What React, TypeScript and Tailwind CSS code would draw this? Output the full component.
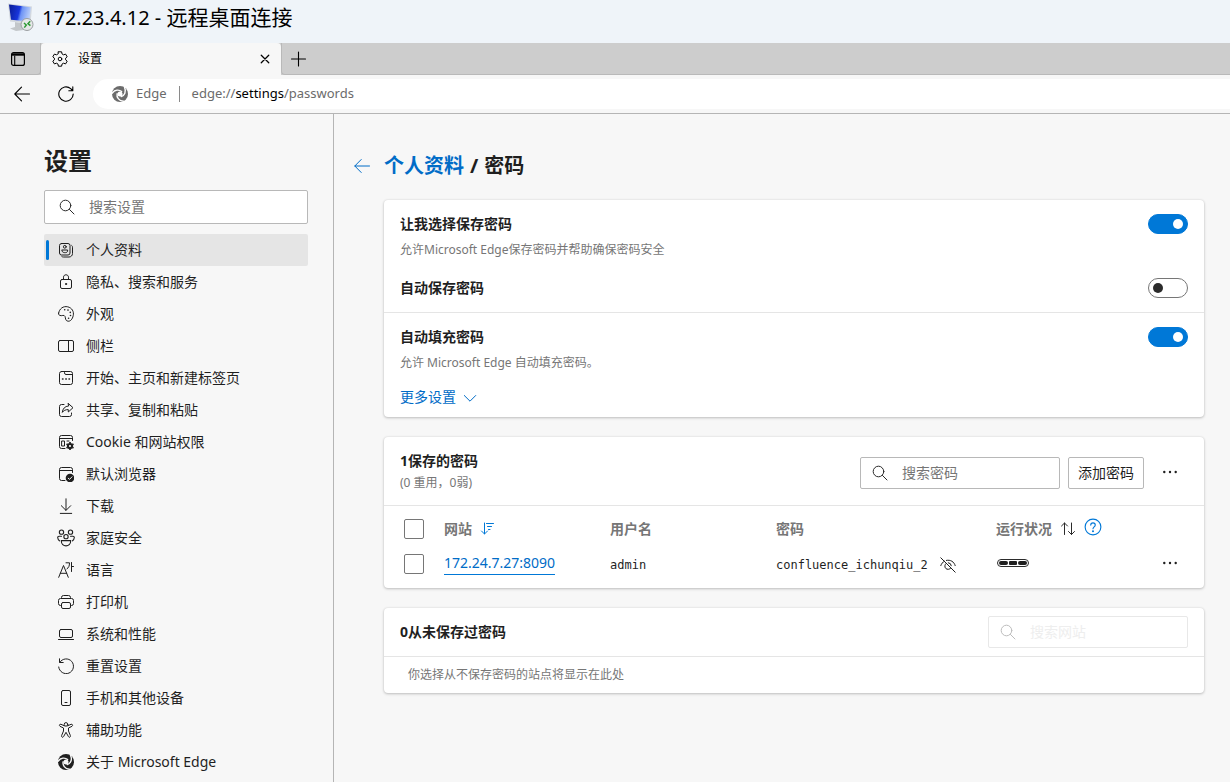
import React, { useState } from 'react';

interface IconProps {
    children: React.ReactNode;
    size?: number;
    className?: string;
}

function Icon({ children, size = 16, className = '' }: IconProps) {
    return (
        <svg
            width={size}
            height={size}
            viewBox="0 0 16 16"
            fill="none"
            stroke="currentColor"
            strokeLinecap="round"
            strokeLinejoin="round"
            aria-hidden="true"
            className={`shrink-0 ${className}`}
        >
            {children}
        </svg>
    );
}

function EdgeIcon({ cut = '#f7f7f7', className = '' }: { cut?: string; className?: string }) {
    const blade = 'M9.6 5.6C7.2 3.4 2.6 3.4 0 7.4';
    return (
        <Icon className={className}>
            <circle cx="8" cy="8" r="8" fill="currentColor" stroke="none" />
            <circle cx="8" cy="8" r="2.5" fill={cut} stroke="none" />
            <g stroke={cut} strokeWidth="1.4">
                <path d={blade} />
                <path d={blade} transform="rotate(120 8 8)" />
                <path d={blade} transform="rotate(240 8 8)" />
            </g>
        </Icon>
    );
}

function SearchIcon({ className = '' }: { className?: string }) {
    return (
        <Icon className={className}>
            <circle cx="6.5" cy="6.5" r="5.3" />
            <path d="M10.4 10.4L15 15" />
        </Icon>
    );
}

function DotsIcon() {
    return (
        <Icon>
            <g fill="currentColor" stroke="none">
                <circle cx="2.3" cy="8" r="1.2" />
                <circle cx="8" cy="8" r="1.2" />
                <circle cx="13.7" cy="8" r="1.2" />
            </g>
        </Icon>
    );
}

function RemoteDesktopIcon() {
    return (
        <svg width="28" height="30" viewBox="0 0 28 30" aria-hidden="true" className="shrink-0">
            <defs>
                <linearGradient id="screen" x1="0" y1="0.1" x2="1" y2="0.3">
                    <stop offset="0" stopColor="#0a1d96" />
                    <stop offset="0.5" stopColor="#1836dc" />
                    <stop offset="0.62" stopColor="#6d93f5" />
                    <stop offset="1" stopColor="#b7cdfa" />
                </linearGradient>
            </defs>
            <path d="M8 19L15 20L17 27L9 28L3 25.5L8 24Z" fill="#c3c7ca" />
            <path d="M1 0.5L25 3.5L23.5 21L3 18.5Z" fill="#d3d8de" />
            <path d="M2 1.5L23.8 4.3L22.3 18.5L4 16.8Z" fill="url(#screen)" />
            <circle cx="20" cy="21.5" r="6" fill="#e6e8e8" stroke="#9b9fa2" />
            <path d="M17 20L19.3 22L17.3 24.6M23.2 18.2L21 20.6L23.4 22.6" fill="none" stroke="#2d9a34" strokeWidth="1.5" />
        </svg>
    );
}

const menu = [
    {
        label: '个人资料',
        icon: (
            <Icon>
                <rect x="1.5" y="1.5" width="10.5" height="11.5" rx="2" />
                <circle cx="6.8" cy="4.8" r="1.4" />
                <path d="M4 8H9.6V9C9.6 11.3 4 11.3 4 9ZM13.7 3.5C14.3 4 14.5 4.5 14.5 5.2V11.5C14.5 13.5 13 15 11 15H5.5C4.8 15 4.3 14.9 3.8 14.5" />
            </Icon>
        ),
    },
    {
        label: '隐私、搜索和服务',
        icon: (
            <Icon>
                <rect x="2.5" y="5.5" width="11" height="9" rx="1.5" />
                <path d="M5.5 5.5V3.2C5.5 0 10.5 0 10.5 3.2V5.5" />
                <circle cx="8" cy="10" r="0.6" fill="currentColor" />
            </Icon>
        ),
    },
    {
        label: '外观',
        icon: (
            <Icon>
                <path d="M0.6 7.2C1.4 2.6 5.2-.2 9.7.8C13.9 1.8 16.2 5.5 15.2 9.7C14.4 13.2 12.5 15.5 9.9 15.2C7.2 14.8 7.7 12.2 7 10.4C6.1 8.2 3.8 10.4 1.7 9.4C.8 9 .5 8.1.6 7.2Z" />
                <g fill="currentColor" stroke="none">
                    <circle cx="6.7" cy="3.7" r="0.8" />
                    <circle cx="10" cy="4.1" r="0.8" />
                    <circle cx="12.3" cy="6.4" r="0.8" />
                    <circle cx="12.5" cy="9.5" r="0.8" />
                    <circle cx="10.6" cy="12.2" r="0.8" />
                </g>
            </Icon>
        ),
    },
    {
        label: '侧栏',
        icon: (
            <Icon>
                <rect x="0.5" y="2.5" width="15" height="11" rx="1.5" />
                <path d="M10.5 2.5V13.5" />
            </Icon>
        ),
    },
    {
        label: '开始、主页和新建标签页',
        icon: (
            <Icon>
                <rect x="1.5" y="1.5" width="13" height="13" rx="2" />
                <path d="M6.5 1.5V2.8Q6.5 4.5 8 4.5H14.5" />
                <path d="M4.5 9H5M7.8 9H8.3M11 9H11.5" strokeWidth="1.5" />
            </Icon>
        ),
    },
    {
        label: '共享、复制和粘贴',
        icon: (
            <Icon>
                <path d="M6 2.5H3.5Q1.5 2.5 1.5 4.5V12.5Q1.5 14.5 3.5 14.5H11.5Q13.5 14.5 13.5 12.5V11" />
                <path d="M10.3 1.5L15 5.7L10.3 10V7.6C7.4 7.5 5.7 8.6 4.3 10.4C4.7 6.8 6.8 4.2 10.3 4Z" />
            </Icon>
        ),
    },
    {
        label: 'Cookie 和网站权限',
        icon: (
            <Icon>
                <path d="M14.5 6.5V3.5Q14.5 1.5 12.5 1.5H3.5Q1.5 1.5 1.5 3.5V12.5Q1.5 14.5 3.5 14.5H7M1.5 4.5H14.5" />
                <path d="M4 7H6.5V12H4ZM9 7H11" />
                <circle cx="12" cy="12" r="2.1" strokeWidth="2" />
                <path d="M12 7.9V9.4M12 14.6V16.1M8.5 10L9.7 10.7M14.3 13.3L15.5 14M8.5 14L9.7 13.3M14.3 10.7L15.5 10" strokeWidth="1.7" strokeLinecap="butt" />
            </Icon>
        ),
    },
    {
        label: '默认浏览器',
        icon: (
            <Icon>
                <path d="M14.5 6.5V3.5Q14.5 1.5 12.5 1.5H3.5Q1.5 1.5 1.5 3.5V12.5Q1.5 14.5 3.5 14.5H7M1.5 4.5H14.5" />
                <circle cx="12" cy="12" r="4.3" fill="currentColor" stroke="none" />
                <path d="M10.2 12.2L11.5 13.4L14 10.8" stroke="#f7f7f7" />
            </Icon>
        ),
    },
    {
        label: '下载',
        icon: (
            <Icon>
                <path d="M8 .8V12.2M3.3 7.7L8 12.4L12.7 7.7M2.3 15.4H13.7" />
            </Icon>
        ),
    },
    {
        label: '家庭安全',
        icon: (
            <Icon size={18}>
                <circle cx="4" cy="2.8" r="1.9" />
                <circle cx="12" cy="2.8" r="1.9" />
                <circle cx="8" cy="6.8" r="1.9" />
                <path d="M3.8 10.3H12.2C12.2 16.6 3.8 16.6 3.8 10.3ZM4 6.4H1.8Q.6 6.4.6 7.6Q.8 9.5 2.2 10.5M12 6.4H14.2Q15.4 6.4 15.4 7.6Q15.2 9.5 13.8 10.5" />
            </Icon>
        ),
    },
    {
        label: '语言',
        icon: (
            <Icon>
                <path d="M.7 15.3L5.5 3.5L10.3 15.3M2.3 11.3H8.7M8 .8H11.5C11.5 4 10.8 5.5 9 6.8M13.5.5V9.5M13.5 4.5H15.5" />
            </Icon>
        ),
    },
    {
        label: '打印机',
        icon: (
            <Icon>
                <path d="M3.5 4.5V3.5Q3.5 1.5 5.5 1.5H10.5Q12.5 1.5 12.5 3.5V4.5M3.5 11.5H2.5Q.5 11.5.5 9.5V6.5Q.5 4.5 2.5 4.5H13.5Q15.5 4.5 15.5 6.5V9.5Q15.5 11.5 13.5 11.5H12.5" />
                <rect x="3.5" y="8.5" width="9" height="6" rx="1.5" />
            </Icon>
        ),
    },
    {
        label: '系统和性能',
        icon: (
            <Icon>
                <rect x="1.5" y="3.5" width="13" height="8" rx="1.5" />
                <path d="M.5 13.5H15.5" />
            </Icon>
        ),
    },
    {
        label: '重置设置',
        icon: (
            <Icon>
                <path d="M1.5.8V4.5H5.2M1.8 4.3A7.4 7.4 0 1 1 .7 9" />
            </Icon>
        ),
    },
    {
        label: '手机和其他设备',
        icon: (
            <Icon>
                <rect x="3.5" y="0.5" width="9" height="15" rx="1.5" />
                <path d="M7 12.5H9" />
            </Icon>
        ),
    },
    {
        label: '辅助功能',
        icon: (
            <Icon>
                <circle cx="8" cy="2.4" r="1.8" />
                <path d="M6.3 3.8L3 2.3C1.5 1.7.8 3.6 2 4.3L5.5 6V9L3.6 13.6C3.1 15.2 5 15.9 5.6 14.5L8 10.3L10.4 14.5C11 15.9 12.9 15.2 12.4 13.6L10.5 9V6L14 4.3C15.2 3.6 14.5 1.7 13 2.3L9.7 3.8" />
            </Icon>
        ),
    },
    { label: '关于 Microsoft Edge', icon: <EdgeIcon /> },
];

interface SearchBoxProps {
    label: string;
    className: string;
    disabled?: boolean;
}

function SearchBox({ label, className, disabled = false }: SearchBoxProps) {
    return (
        <label
            className={`flex items-center rounded-[2px] border bg-white ${disabled ? 'border-[#e8e8e8] text-[#bdbdbd]' : 'border-[#b8b8b8] text-[#2b2b2b]'} ${className}`}
        >
            <SearchIcon />
            <input
                type="text"
                aria-label={label}
                placeholder={label}
                disabled={disabled}
                className="min-w-0 flex-1 bg-transparent pl-[14px] text-sm outline-none placeholder:text-[#767676] disabled:placeholder:text-[#eeeeee]"
            />
        </label>
    );
}

interface ToggleRowProps {
    title: string;
    description?: string;
    defaultChecked?: boolean;
}

function ToggleRow({ title, description, defaultChecked = false }: ToggleRowProps) {
    const [checked, setChecked] = useState(defaultChecked);
    return (
        <label className="flex cursor-pointer items-start justify-between">
            <span>
                <span className="block text-sm font-bold leading-5">{title}</span>
                {description && <span className="mt-2 block text-xs leading-4 text-[#767676]">{description}</span>}
            </span>
            <input type="checkbox" role="switch" checked={checked} onChange={() => setChecked(!checked)} className="peer sr-only" />
            <span className="flex h-5 w-10 shrink-0 items-center rounded-full border border-[#767676] bg-white px-1 text-[#2b2b2b] peer-checked:justify-end peer-checked:border-[#0078d7] peer-checked:bg-[#0078d7] peer-checked:text-white">
                <span className="size-[10px] rounded-full bg-current" />
            </span>
        </label>
    );
}

function Checkbox({ label }: { label: string }) {
    return (
        <input
            type="checkbox"
            aria-label={label}
            className="block size-5 appearance-none rounded-[2px] border border-[#767676] bg-white checked:bg-[#0078d7]"
        />
    );
}

const card = 'rounded bg-white shadow-[0_1px_3px_rgba(0,0,0,0.22),0_0_2px_rgba(0,0,0,0.1)]';

function Sidebar() {
    return (
        <aside className="w-[334px] shrink-0 border-r border-[#b5b5b5] pl-11 pr-[25px] pt-[31px]">
            <h1 className="text-2xl font-bold leading-8">设置</h1>
            <SearchBox label="搜索设置" className="mt-[13px] h-[34px] pl-[14px]" />
            <nav className="mt-[10px]">
                {menu.map((item, i) => (
                    <a
                        key={item.label}
                        href="#"
                        aria-current={i === 0 ? 'page' : undefined}
                        className={`flex h-8 items-center rounded-[2px] pl-[2px] text-sm ${i === 0 ? 'bg-[#e5e5e5]' : ''}`}
                    >
                        <span className={`h-5 w-[3px] rounded-full ${i === 0 ? 'bg-[#0078d7]' : ''}`} />
                        <span className="ml-2 flex w-[18px] justify-center">{item.icon}</span>
                        <span className="ml-[11px]">{item.label}</span>
                    </a>
                ))}
            </nav>
        </aside>
    );
}

function SavedPasswords() {
    return (
        <section className={card}>
            <div className="flex h-[69px] items-center border-b border-[#e5e5e5] pl-4 pr-[18px]">
                <div className="flex-1">
                    <h3 className="text-sm font-bold leading-5">1保存的密码</h3>
                    <p className="mt-1 text-xs leading-4 text-[#767676]">(0 重用，0弱)</p>
                </div>
                <SearchBox label="搜索密码" className="mt-1 h-8 w-[200px] pl-[11px]" />
                <button type="button" className="ml-2 mt-1 h-8 w-[76px] rounded-[2px] border border-[#b8b8b8] text-sm">
                    添加密码
                </button>
                <button type="button" aria-label="更多操作" className="ml-[10px] mt-[2px] flex size-8 items-center justify-center">
                    <DotsIcon />
                </button>
            </div>
            <table className="w-full table-fixed text-left text-sm">
                <thead className="text-[#767676]">
                    <tr className="h-[46px]">
                        <th className="w-[60px] pl-5">
                            <Checkbox label="全选" />
                        </th>
                        <th className="w-[166px]">
                            <button type="button" className="flex items-center gap-2 font-bold">
                                网站
                                <Icon className="text-[#0078d7]">
                                    <path d="M4.5 2V13M1.5 10L4.5 13L7.5 10M6.5 2.5H13.5M7.5 5.5H11.5M8.5 8.5H10" />
                                </Icon>
                            </button>
                        </th>
                        <th className="w-[166px]">用户名</th>
                        <th className="w-[220px]">密码</th>
                        <th>
                            <span className="flex items-center gap-2">
                                运行状况
                                <button type="button" aria-label="排序" className="text-[#2b2b2b]">
                                    <Icon>
                                        <path d="M4.5 2V13.5M1.5 5L4.5 2L7.5 5M11.5 2V13.5M8.5 10.5L11.5 13.5L14.5 10.5" />
                                    </Icon>
                                </button>
                                <button type="button" aria-label="帮助" className="mb-1 text-[#0078d7]">
                                    <Icon size={18}>
                                        <circle cx="8" cy="8" r="7" />
                                        <path d="M6 6.3C6 3.6 10 3.7 10 6.2C10 7.8 8 8 8 9.6" />
                                        <circle cx="8" cy="11.7" r="0.4" fill="currentColor" />
                                    </Icon>
                                </button>
                            </span>
                        </th>
                        <th className="w-[50px]" />
                    </tr>
                </thead>
                <tbody>
                    <tr className="h-9 align-top">
                        <td className="pl-5 pt-[2px]">
                            <Checkbox label="选择 172.24.7.27:8090" />
                        </td>
                        <td>
                            <a href="#" className="inline-block border-b border-[#0078d7] leading-[22px] text-[#006cc7]">
                                172.24.7.27:8090
                            </a>
                        </td>
                        <td className="pt-[5px] font-['DejaVu_Sans_Mono',monospace] text-xs leading-4">admin</td>
                        <td className="pt-[5px]">
                            <span className="flex items-center gap-3 font-['DejaVu_Sans_Mono',monospace] text-xs leading-4">
                                confluence_ichunqiu_2
                                <button type="button" aria-label="隐藏密码">
                                    <Icon>
                                        <path d="M.8.8L15.2 15.2M.8 8.6C1.5 6.6 2.8 5.1 4.3 4.2M6.4 3.4C10.6 2.5 14.1 4.7 15.2 8.6M6.2 6.4A3.3 3.3 0 1 0 10.8 11M8.3 5.7A3.3 3.3 0 0 1 11.3 8.7" />
                                    </Icon>
                                </button>
                            </span>
                        </td>
                        <td className="pl-[1px] pt-[7px]">
                            <svg width="32" height="8" viewBox="0 0 32 8" aria-label="强" className="block">
                                <rect x="0.5" y="0.5" width="31" height="7" rx="3.5" fill="none" stroke="#2b2b2b" />
                                <rect x="2" y="2" width="9" height="4" rx="2" fill="#1f1f1f" />
                                <rect x="12" y="2" width="8" height="4" rx="1" fill="#1f1f1f" />
                                <rect x="21" y="2" width="9" height="4" rx="2" fill="#1f1f1f" />
                            </svg>
                        </td>
                        <td>
                            <button type="button" aria-label="更多操作" className="ml-2 flex h-[22px] items-center">
                                <DotsIcon />
                            </button>
                        </td>
                    </tr>
                </tbody>
            </table>
        </section>
    );
}

export default function App() {
    return (
        <div className="flex min-h-screen flex-col bg-[#f7f7f7] font-['Noto_Sans','Noto_Sans_CJK_SC',sans-serif] text-[#1f1f1f]">
            <header className="flex h-[43px] items-center bg-[#eff4f9] pb-2 pl-[7px] text-xl text-black">
                <RemoteDesktopIcon />
                <span className="ml-[7px] whitespace-pre">172.23.4.12 - </span>
                <span className="text-[21px]">远程桌面连接</span>
            </header>

            <div className="flex h-8 bg-[#cdcdcd] text-black">
                <button type="button" aria-label="标签页操作" className="flex w-[41px] items-center rounded-br border-b border-r border-[#b9b9b9] pl-[10px]">
                    <Icon>
                        <rect x="1.6" y="1.6" width="12.8" height="12.8" rx="2" strokeWidth="1.2" />
                        <path d="M2 3.5H14" strokeWidth="2.4" strokeLinecap="butt" />
                        <path d="M4.7 5V14" strokeWidth="1.1" />
                    </Icon>
                </button>
                <div className="flex w-60 items-center rounded-t bg-[#f7f7f7] pl-[11px] pr-[10px] text-xs">
                    <Icon>
                        <path d="M6.4 .8H9.6L10 2.9L11.5 3.8L13.6 3.1L15.2 5.8L13.6 7.2V8.8L15.2 10.2L13.6 12.9L11.5 12.2L10 13.1L9.6 15.2H6.4L6 13.1L4.5 12.2L2.4 12.9L.8 10.2L2.4 8.8V7.2L.8 5.8L2.4 3.1L4.5 3.8L6 2.9Z" />
                        <circle cx="8" cy="8" r="1.8" />
                    </Icon>
                    <span className="ml-[10px] flex-1">设置</span>
                    <button type="button" aria-label="关闭标签页">
                        <Icon size={12}>
                            <path d="M3 3L13 13M13 3L3 13" strokeWidth="1.7" />
                        </Icon>
                    </button>
                </div>
                <div className="flex flex-1 items-center rounded-bl border-b border-l border-[#b9b9b9] pl-[9px]">
                    <button type="button" aria-label="新建标签页">
                        <Icon>
                            <path d="M7.5 1V15M.5 8H14.5" strokeWidth="1.1" />
                        </Icon>
                    </button>
                </div>
            </div>

            <div className="flex h-[39px] items-center border-b border-[#b5b5b5] pl-[14px] text-black">
                <button type="button" aria-label="后退">
                    <Icon>
                        <path d="M15.5 8H.8M7.5 1.2L.8 8L7.5 14.8" strokeWidth="1.1" />
                    </Icon>
                </button>
                <button type="button" aria-label="刷新" className="ml-7">
                    <Icon>
                        <path d="M15.2 8A7.2 7.2 0 1 1 12.7 2.6L14.5 4.5M14.8.8V4.7H10.8" strokeWidth="1.1" />
                    </Icon>
                </button>
                <div className="ml-[19px] flex h-[30px] flex-1 items-center rounded-l-full bg-white pl-[19px] text-[13px] text-[#6b6b6b]">
                    <EdgeIcon cut="#ffffff" />
                    <span className="ml-2">Edge</span>
                    <span className="mx-3 h-4 w-px bg-[#8a8a8a]" />
                    <span>
                        edge://<span className="text-black">settings</span>/passwords
                    </span>
                </div>
            </div>

            <div className="flex flex-1">
                <Sidebar />
                <main className="min-w-0 flex-1 pb-8 pl-5 pr-[26px] pt-9">
                    <h2 className="flex h-8 items-center text-xl font-bold">
                        <a href="#" aria-label="返回" className="mr-[14px] text-[#006cc7]">
                            <Icon>
                                <path d="M15.5 8H.8M7.2 1.5L.8 8L7.2 14.5" />
                            </Icon>
                        </a>
                        <a href="#" className="text-[#006cc7]">
                            个人资料
                        </a>
                        <span className="mx-[6px]">/</span>
                        <span>密码</span>
                    </h2>

                    <div className="ml-[30px] mt-[18px] flex flex-col gap-5">
                        <section className={card}>
                            <div className="flex flex-col gap-5 border-b border-[#e5e5e5] px-4 pb-[14px] pt-[14px]">
                                <ToggleRow title="让我选择保存密码" description="允许Microsoft Edge保存密码并帮助确保密码安全" defaultChecked />
                                <ToggleRow title="自动保存密码" />
                            </div>
                            <div className="px-4 pb-[10px] pt-[14px]">
                                <ToggleRow title="自动填充密码" description="允许 Microsoft Edge 自动填充密码。" defaultChecked />
                                <button type="button" className="mt-4 flex items-center gap-[6px] text-sm leading-5 text-[#006cc7]">
                                    更多设置
                                    <Icon>
                                        <path d="M2.3 6.5L8 12.2L13.7 6.5" />
                                    </Icon>
                                </button>
                            </div>
                        </section>

                        <SavedPasswords />

                        <section className={card}>
                            <div className="flex items-center justify-between border-b border-[#e5e5e5] px-4 py-2">
                                <h3 className="text-sm font-bold">0从未保存过密码</h3>
                                <SearchBox label="搜索网站" className="h-8 w-[200px] pl-[11px]" disabled />
                            </div>
                            <p className="px-6 py-[10px] text-xs leading-4 text-[#767676]">你选择从不保存密码的站点将显示在此处</p>
                        </section>
                    </div>
                </main>
            </div>
        </div>
    );
}
